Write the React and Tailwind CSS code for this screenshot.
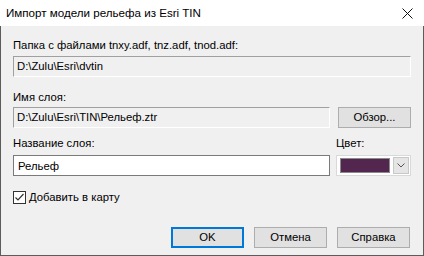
import React, { useState } from 'react';

const font = "font-['Liberation_Sans',Arial,sans-serif] text-[11.3px] text-black";

function Btn({ children, primary, className = '' }) {
  return (
    <button
      className={`h-[21px] w-[73px] bg-[#e1e1e1] ${primary ? 'border-2 border-[#0078d7]' : 'border border-[#adadad]'} ${className}`}
    >
      {children}
    </button>
  );
}

function SunkenField({ value, className = '' }) {
  return (
    <div
      className={`flex h-[21px] items-center border-t border-l border-t-[#a0a0a0] border-l-[#a0a0a0] border-r border-b border-r-white border-b-white bg-[#f0f0f0] pl-[3px] ${className}`}
    >
      {value}
    </div>
  );
}

export default function App() {
  const [checked, setChecked] = useState(true);
  const [name, setName] = useState('Рельеф');

  return (
    <div className={`flex h-[256px] w-[424px] flex-col bg-[#f0f0f0] ${font}`}>
      <div className="flex h-[26px] shrink-0 items-center justify-between bg-white pl-[6px] pr-[11px]">
        <span className="font-['Liberation_Sans',sans-serif] text-[11.6px] text-black">
          Импорт модели рельефа из Esri TIN
        </span>
        <svg width="11" height="11" viewBox="0 0 11 11">
          <path d="M0.5 0.5 L10.5 10.5 M10.5 0.5 L0.5 10.5" stroke="#111" strokeWidth="1" />
        </svg>
      </div>

      <div className="flex flex-1 flex-col border-x border-b border-[#5c5c5c] px-[12px]">
        <div className="mt-[13px] leading-[13px]">Папка с файлами tnxy.adf, tnz.adf, tnod.adf:</div>
        <SunkenField value="D:\Zulu\Esri\dvtin" className="mt-[4px] w-[398px]" />

        <div className="mt-[14px] leading-[13px]">Имя слоя:</div>
        <div className="mt-[3px] flex items-center">
          <SunkenField value="D:\Zulu\Esri\TIN\Рельеф.ztr" className="w-[317px]" />
          <Btn className="ml-[8px] h-[20px]">Обзор...</Btn>
        </div>

        <div className="mt-[9px] flex items-end">
          <div className="w-[323px] leading-[13px]">Название слоя:</div>
          <div className="leading-[13px]">Цвет:</div>
        </div>
        <div className="mt-[5px] flex">
          <input
            value={name}
            onChange={(e) => setName(e.target.value)}
            className="h-[21px] w-[317px] border border-[#7a7a7a] bg-white pl-[4px] outline-none"
          />
          <div className="ml-[6px] flex h-[21px] w-[75px] items-center border border-[#d9d9d9] bg-white pl-[3px]">
            <div className="h-[15px] w-[50px] border border-[#8a8a8a] bg-[#52264f]" />
            <div className="ml-[3px] flex h-[17px] w-[16px] items-center justify-center border border-[#c8c8c8] bg-[#e5e5e5]">
              <svg width="8" height="5" viewBox="0 0 8 5">
                <path d="M0.5 0.5 L4 4 L7.5 0.5" stroke="#555" fill="none" />
              </svg>
            </div>
          </div>
        </div>

        <label className="mt-[13px] flex items-center">
          <span
            onClick={() => setChecked(!checked)}
            className="flex h-[13px] w-[13px] items-center justify-center border border-[#333] bg-white"
          >
            {checked && (
              <svg width="9" height="9" viewBox="0 0 9 9">
                <path d="M0.5 4.5 L3 7 L8.5 1" stroke="#333" fill="none" strokeWidth="1.2" />
              </svg>
            )}
          </span>
          <span className="ml-[3px]">Добавить в карту</span>
        </label>

        <div className="mt-[21px] flex justify-end gap-[10px] pr-[1px]">
          <Btn primary>OK</Btn>
          <Btn>Отмена</Btn>
          <Btn>Справка</Btn>
        </div>
      </div>
    </div>
  );
}
